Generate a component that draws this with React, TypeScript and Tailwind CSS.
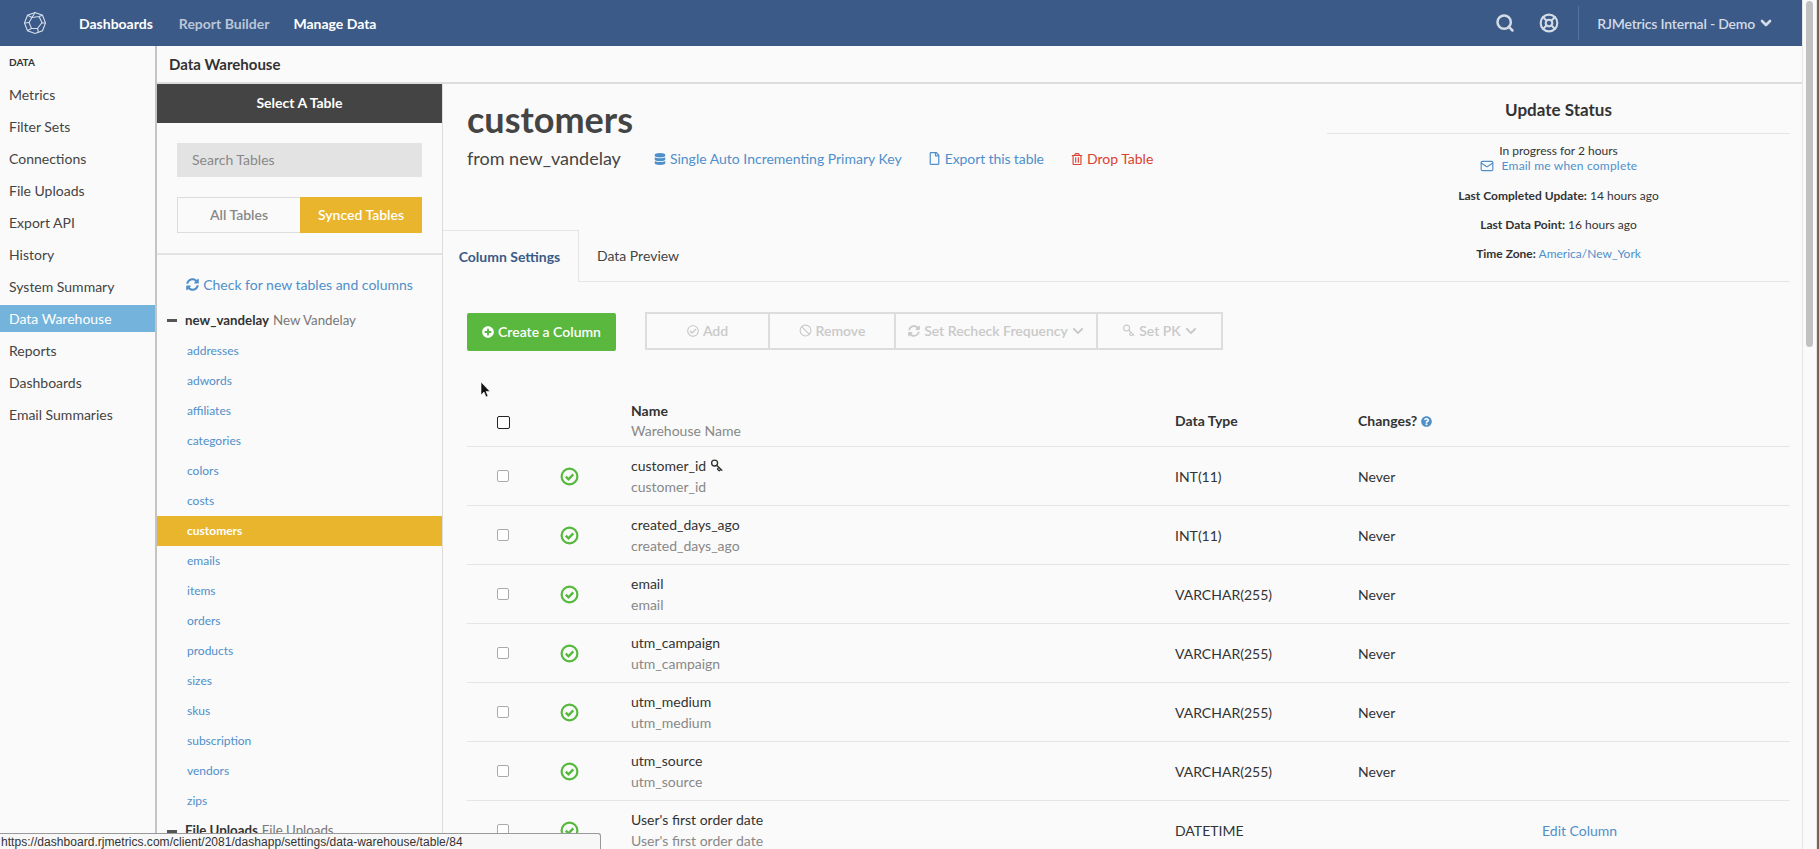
import { Search, LifeBuoy, ChevronDown, Mail, Ban, Key } from 'lucide-react'
import { FaDatabase, FaSyncAlt, FaRegFile, FaRegTrashAlt, FaPlusCircle, FaRegCheckCircle, FaQuestionCircle, FaChevronDown } from 'react-icons/fa'

const navItems = ['Metrics', 'Filter Sets', 'Connections', 'File Uploads', 'Export API', 'History', 'System Summary', 'Data Warehouse', 'Reports', 'Dashboards', 'Email Summaries']
const tables = ['addresses', 'adwords', 'affiliates', 'categories', 'colors', 'costs', 'customers', 'emails', 'items', 'orders', 'products', 'sizes', 'skus', 'subscription', 'vendors', 'zips']

const columns = [
  { name: 'customer_id', type: 'INT(11)', changes: 'Never', pk: true },
  { name: 'created_days_ago', type: 'INT(11)', changes: 'Never' },
  { name: 'email', type: 'VARCHAR(255)', changes: 'Never' },
  { name: 'utm_campaign', type: 'VARCHAR(255)', changes: 'Never' },
  { name: 'utm_medium', type: 'VARCHAR(255)', changes: 'Never' },
  { name: 'utm_source', type: 'VARCHAR(255)', changes: 'Never' },
  { name: "User's first order date", type: 'DATETIME', changes: '', edit: true },
]

const Logo = () => (
  <svg width="24" height="24" viewBox="0 0 24 24" fill="none" stroke="#d5deea" strokeWidth="1.1">
    <path d="M12 1.5l7.5 2.8 3 7.7-3 7.7-7.5 2.8-7.5-2.8-3-7.7 3-7.7z" />
    <path d="M9 6.5l7-1 3 6-4.5 6h-6l-2.5-6z" />
    <path d="M12 1.5L9 6.5M19.5 4.3L16 5.5M22.5 12H19M14.5 17.5l1 4M8.5 17.5l-4 2M6.5 11.5l-5 .5M9 6.5L4.5 4.3" />
  </svg>
)

const StatusIcon = () => (
  <svg width="19" height="19" viewBox="0 0 19 19" fill="none" stroke="#56b93c">
    <circle cx="9.5" cy="9.5" r="7.9" strokeWidth="2.2" />
    <path d="M5.8 9.6l2.7 2.7 4.8-5" strokeWidth="2.4" />
  </svg>
)

const TableColumn = ({ col }: { col: (typeof columns)[number] }) => (
  <div className="flex h-[59px] items-center border-b border-[#e5e5e5] text-[14px]">
    <div className="flex w-[72px] justify-center">
      <span className="h-[12px] w-[12px] rounded-[2px] border border-[#aaa] bg-white" />
    </div>
    <div className="flex w-[60px] justify-center">
      <StatusIcon />
    </div>
    <div className="w-[576px] pl-[32px]">
      <div className="flex items-center gap-1 leading-[21px] text-[#333]">
        {col.name}
        {col.pk && <Key size={13} strokeWidth={2.5} className="rotate-90 text-[#333]" />}
      </div>
      <div className="leading-[21px] text-[#888]">{col.name}</div>
    </div>
    <div className="w-[183px] text-[#333]">{col.type}</div>
    <div className="w-[184px] text-[#333]">{col.changes}</div>
    {col.edit && <a className="text-[#4f8fca]">Edit Column</a>}
  </div>
)

const GroupButton = ({ width, children }: { width: string; children: React.ReactNode }) => (
  <div className={`flex h-full items-center justify-center gap-1 border-r-2 border-[#ddd] text-[14px] font-semibold text-[#c9c9c9] last:border-r-0 ${width}`}>
    {children}
  </div>
)

export default function App() {
  return (
    <div className="relative flex h-[849px] w-[1819px] overflow-hidden bg-[#fafafa] font-['Lato',sans-serif] text-[#333]">
      <div className="flex w-[1802px] flex-col">
        <header className="flex h-[46px] shrink-0 items-center bg-[#3b5a87] text-[14px] font-bold">
          <div className="ml-[23px] mr-[32px]"><Logo /></div>
          <a className="mr-[26px] text-white">Dashboards</a>
          <a className="mr-[24px] text-[#b9c6d8]">Report Builder</a>
          <a className="text-white">Manage Data</a>
          <div className="ml-auto flex items-center text-[#d3dbe6]">
            <Search size={20} strokeWidth={3} className="mr-[24px]" />
            <LifeBuoy size={20} strokeWidth={2.5} className="mr-[19px]" />
            <div className="mr-[18px] h-[34px] w-px bg-[#55729b]" />
            <span className="text-[14px] font-semibold tracking-[-0.2px]">RJMetrics Internal - Demo</span>
            <ChevronDown size={16} strokeWidth={4} className="ml-[3px] mr-[28px]" />
          </div>
        </header>

        <div className="flex min-h-0 flex-1">
          <aside className="w-[157px] shrink-0 border-r-2 border-[#c4c4c4]">
            <div className="pb-[11px] pl-[9px] pt-[9px] text-[10px] font-bold leading-[15px]">DATA</div>
            {navItems.map((item) => (
              <div
                key={item}
                className={`mb-[5px] flex h-[27px] items-center pl-[9px] text-[14px] ${item === 'Data Warehouse' ? 'bg-[#74b3dc] text-white' : 'text-[#444]'}`}
              >
                {item}
              </div>
            ))}
          </aside>

          <div className="flex min-w-0 flex-1 flex-col">
            <div className="h-[38px] shrink-0 border-b-2 border-[#ddd] pl-[12px] text-[15px] font-bold leading-[36px]">Data Warehouse</div>

            <div className="flex min-h-0 flex-1">
              <div className="w-[286px] shrink-0 border-r border-[#ddd]">
                <div className="flex h-[39px] items-center justify-center bg-[#444] pb-[3px] text-[14px] font-bold text-white">Select A Table</div>
                <div className="border-b-2 border-[#e3e3e3] px-[20px] py-[20px]">
                  <div className="flex h-[34px] items-center bg-[#e3e3e3] pb-[2px] pl-[15px] text-[14px] text-[#888]">Search Tables</div>
                  <div className="mt-[20px] flex h-[36px] text-[14px] font-semibold">
                    <div className="flex flex-1 items-center justify-center border border-r-0 border-[#ddd] pb-[2px] text-[#888]">All Tables</div>
                    <div className="flex flex-1 items-center justify-center bg-[#e8b52c] pb-[2px] text-white">Synced Tables</div>
                  </div>
                </div>
                <div className="flex h-[60px] items-center justify-center gap-1 pb-[2px] text-[14px] text-[#4f8fca]">
                  <FaSyncAlt className="text-[13px]" />
                  Check for new tables and columns
                </div>
                <div className="flex h-[11px] items-center pl-[10px] text-[13.3px]">
                  <span className="mr-[8px] h-[3px] w-[10px] bg-[#555]" />
                  <b className="mr-1 font-bold">new_vandelay</b>
                  <span className="text-[#777]">New Vandelay</span>
                </div>
                <div className="pt-[10px]">
                  {tables.map((t) => (
                    <div
                      key={t}
                      className={`flex h-[30px] items-center pl-[30px] text-[12px] ${t === 'customers' ? 'bg-[#e8b52c] font-bold text-white' : 'text-[#4f8fca]'}`}
                    >
                      {t}
                    </div>
                  ))}
                </div>
                <div className="flex h-[30px] items-center pl-[10px] text-[13.3px]">
                  <span className="mr-[8px] h-[3px] w-[10px] bg-[#555]" />
                  <b className="mr-1 font-bold">File Uploads</b>
                  <span className="text-[#777]">File Uploads</span>
                </div>
              </div>

              <main className="mr-[12px] min-w-0 flex-1">
                <div className="flex h-[198px] border-b border-[#e5e5e5]">
                  <div className="flex flex-1 flex-col">
                    <div className="pl-[24px] pt-[14px]">
                      <h1 className="text-[36px] font-bold leading-[42px] text-[#444]">customers</h1>
                      <div className="mt-[5px] flex items-center text-[14px]">
                        <span className="mr-[33px] text-[18px] text-[#444]">from new_vandelay</span>
                        <a className="mr-[26px] flex items-center gap-1 text-[#4f8fca]"><FaDatabase className="text-[12px]" />Single Auto Incrementing Primary Key</a>
                        <a className="mr-[27px] flex items-center gap-1 tracking-[-0.1px] text-[#4f8fca]"><FaRegFile className="text-[13px]" />Export this table</a>
                        <a className="flex items-center gap-1 text-[#d9412e]"><FaRegTrashAlt className="text-[12px]" />Drop Table</a>
                      </div>
                    </div>
                    <div className="mt-auto flex text-[14px]">
                      <div className="z-10 -mb-px flex h-[52px] w-[136px] items-center justify-center border-r border-t border-[#e5e5e5] bg-[#fafafa] pr-[2px] font-bold text-[#3b5a87]">Column Settings</div>
                      <div className="flex h-[51px] w-[118px] items-center justify-center text-[#444]">Data Preview</div>
                    </div>
                  </div>
                  <div className="w-[463px] shrink-0 text-center text-[12px]">
                    <div className="flex h-[50px] items-center justify-center border-b border-[#e5e5e5] pt-[3px] text-[17px] font-bold">Update Status</div>
                    <div className="pt-[9px] leading-[15px]">In progress for 2 hours</div>
                    <div className="flex items-center justify-center gap-2 leading-[15px] tracking-[0.2px] text-[#4f8fca]"><Mail size={14} />Email me when complete</div>
                    <div className="mt-[15px] leading-[15px]"><b>Last Completed Update:</b> 14 hours ago</div>
                    <div className="mt-[14px] leading-[15px]"><b>Last Data Point:</b> 16 hours ago</div>
                    <div className="mt-[14px] leading-[15px]"><b>Time Zone:</b> <span className="text-[#4f8fca]">America/New_York</span></div>
                  </div>
                </div>

                <div className="pl-[24px]">
                  <div className="flex h-[96px] items-center pt-[3px]">
                    <button className="flex h-[38px] w-[149px] items-center justify-center gap-1 rounded-[2px] bg-[#5bb83e] text-[14px] font-semibold text-white">
                      <FaPlusCircle className="text-[12px]" />Create a Column
                    </button>
                    <div className="mb-[2px] ml-[29px] flex h-[38px] w-[578px] border-2 border-[#ddd]">
                      <GroupButton width="w-[123px]"><FaRegCheckCircle className="text-[12px]" />Add</GroupButton>
                      <GroupButton width="w-[126px]"><Ban size={13} />Remove</GroupButton>
                      <GroupButton width="w-[202px]"><FaSyncAlt className="text-[12px]" />Set Recheck Frequency<FaChevronDown className="text-[12px]" /></GroupButton>
                      <GroupButton width="w-[123px]"><Key size={13} className="rotate-90" />Set PK<FaChevronDown className="text-[12px]" /></GroupButton>
                    </div>
                  </div>

                  <div className="relative">
                    <svg className="absolute left-[13px] top-[3px]" width="11" height="17" viewBox="0 0 11 17">
                      <path d="M1 1v13l3-3 2 5 2-1-2-4.5h4z" fill="#111" stroke="#fff" strokeWidth="0.6" />
                    </svg>
                    <div className="flex h-[69px] items-end border-b border-[#e5e5e5] pb-[5px] text-[14px] font-bold">
                      <div className="flex h-[42px] w-[72px] items-center justify-center pt-[5px]">
                        <span className="h-[13px] w-[13px] rounded-[2px] border-[1.5px] border-[#222] bg-white" />
                      </div>
                      <div className="w-[60px]" />
                      <div className="w-[576px] pl-[32px]">
                        <div className="leading-[20px]">Name</div>
                        <div className="font-normal leading-[20px] text-[#888]">Warehouse Name</div>
                      </div>
                      <div className="w-[183px] pb-[10px] leading-[20px]">Data Type</div>
                      <div className="flex items-center gap-1 pb-[10px] leading-[20px]">Changes?<FaQuestionCircle className="text-[11px] text-[#4f8fca]" /></div>
                    </div>
                    {columns.map((col) => (
                      <TableColumn key={col.name} col={col} />
                    ))}
                  </div>
                </div>
              </main>
            </div>
          </div>
        </div>
      </div>

      <div className="w-[15px] shrink-0 border-x border-[#e5e5e5] bg-[#fafafa] px-[3px] pt-[1px]">
        <div className="h-[346px] rounded-[4px] bg-[#c1c1c1]" />
      </div>
      <div className="w-[2px] shrink-0 bg-[#7a6650]" />

      <div className="absolute bottom-0 left-0 h-[16px] w-[601px] rounded-tr-[3px] border-r border-t border-[#999] bg-[#f7f7f7] pl-[1px] font-['Liberation_Sans',sans-serif] text-[12px] leading-[16px] tracking-[0.04px] text-[#333]">
        https://dashboard.rjmetrics.com/client/2081/dashapp/settings/data-warehouse/table/84
      </div>
    </div>
  )
}
